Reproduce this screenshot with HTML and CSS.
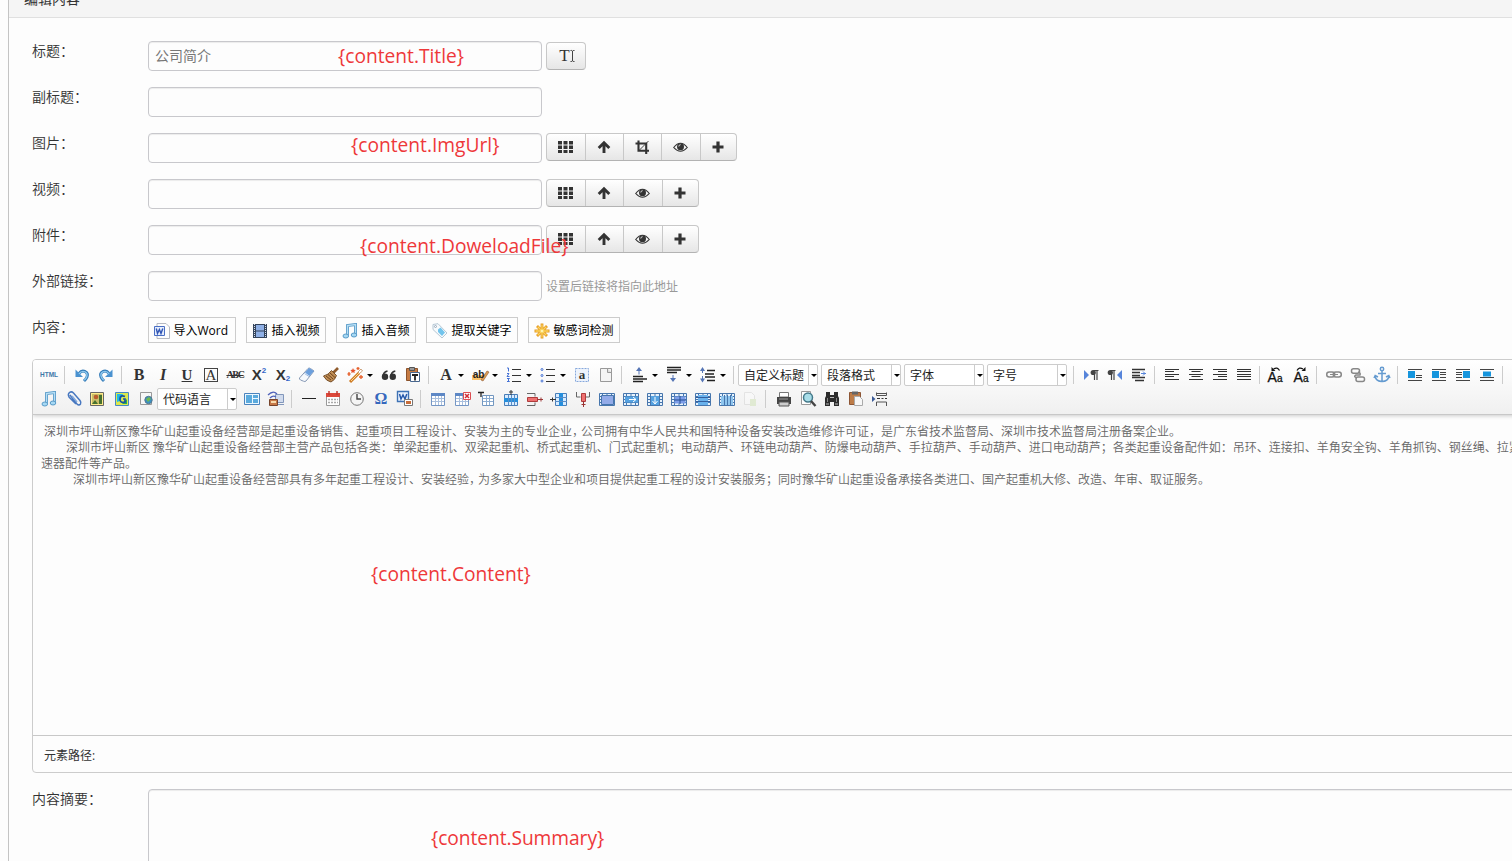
FILE: index.html
```
<!DOCTYPE html>
<html lang="zh-CN">
<head>
<meta charset="utf-8">
<title>编辑内容</title>
<link rel="stylesheet" href="styles.css">
</head>
<body>
<svg class="defs" width="0" height="0" aria-hidden="true">
<defs>
<symbol id="grid" viewBox="0 0 20 20"><path fill="#333" d="M2 4h4v3.500H2zM7.500 4h4v3.500h-4zM13 4h4v3.500h-4zM2 8.500h4V12H2zM7.500 8.500h4V12h-4zM13 8.500h4V12h-4zM2 13h4v3H2zM7.500 13h4v3h-4zM13 13h4v3h-4z"/></symbol>
<symbol id="up" viewBox="0 0 20 20"><path d="M3.700 11 9 5.700l5.300 5.300M9 6.500V16" fill="none" stroke="#333" stroke-width="2.900"/></symbol>
<symbol id="crop" viewBox="0 0 20 20"><path d="M5.500 3.500v10.200H16M2.500 6.500h10.700V17" fill="none" stroke="#333" stroke-width="2.100"/><path d="m6 13.500 9.500-9.500" stroke="#333" stroke-width=".9"/></symbol>
<symbol id="eye" viewBox="0 0 20 20"><path d="M2.700 10.500Q9.500 2 16.300 10.500 9.500 18 2.700 10.500Z" fill="none" stroke="#333" stroke-width="1.100"/><circle cx="9.500" cy="9.800" r="3.500" fill="#333"/><path d="M7.800 9.500q0-1.800 1.800-1.800" stroke="#ddd" fill="none"/></symbol>
<symbol id="plus" viewBox="0 0 20 20"><path d="M9 4.500v11M3.500 10h11" stroke="#333" stroke-width="3.200"/></symbol>
<symbol id="caret" viewBox="0 0 5 14"><path d="M2.500 2v10M.5 1.500h1.300l.7.700.7-.7h1.300M.5 12.500h1.300l.7-.7.7.7h1.300" fill="none" stroke="#444"/></symbol>
<symbol id="word" viewBox="0 0 16 16"><path d="M3 .5h9l3.500 3.500v11.500H3z" fill="#fdfdfd" stroke="#b5b9c2"/><path d="M.5 3.500h10v9H.5z" fill="#e5edfc" stroke="#4a6fc4"/><path d="m2.300 5.500 1.200 5 1.900-4 1.600 4 1.800-5" fill="none" stroke="#3055b5" stroke-width="1.400"/></symbol>
<symbol id="film" viewBox="0 0 16 16"><path d="M1 1h14v14H1z" fill="#34445c"/><path d="M4 2h8v5.500H4zM4 8.500h8V14H4z" fill="#8fb0e6"/><path d="M2.500 1v14M13.500 1v14" stroke="#d8dfea" stroke-dasharray="1 1"/></symbol>
<symbol id="music" viewBox="0 0 16 16"><path d="M5.500 12.500V2.500l8-1v10" fill="none" stroke="#5a9bc8" stroke-width="3"/><path d="M5.500 12.500V2.500l8-1v10" fill="none" stroke="#b6def4" stroke-width="1.300"/><ellipse cx="3.800" cy="13" rx="2.800" ry="2" fill="#a6d8f3" stroke="#5a9bc8"/><ellipse cx="12" cy="12" rx="2.800" ry="2" fill="#a6d8f3" stroke="#5a9bc8"/></symbol>
<symbol id="tag" viewBox="0 0 16 16"><path d="m1 1.500 5-.8L15 10l-5 5L1 6.500z" fill="#f7fafc" stroke="#b5c7d4"/><path d="m6 6.500 2.500-2 4.500 5-3 3.500-4-4z" fill="#72c4ec"/><circle cx="3.500" cy="3.500" r="1" fill="#fff" stroke="#9ab"/></symbol>
<symbol id="star" viewBox="0 0 16 16"><path d="M8 .5v15M.5 8h15M3 3l10 10M13 3 3 13" stroke="#e69b22" stroke-width="2.800"/><path d="M8 1.500v13M1.500 8h13M3.700 3.700l8.600 8.600M12.300 3.700l-8.600 8.600" stroke="#fbd35c" stroke-width="1.300"/><circle cx="8" cy="8" r="1.300" fill="#fff3b0"/></symbol>
<symbol id="undo" viewBox="0 0 20 20"><path d="M7 8.500q2.500-3.500 6-2 3.500 1.700 2 5.500-.8 2-3 4" fill="none" stroke="#347bb8" stroke-width="3"/><path d="M3.500 4.500V12H11z" fill="#4a92d0"/><path d="M7 8.800q2.500-3.500 6-2 3 1.500 1.700 5-.7 2-2.400 3.500" fill="none" stroke="#8cc8ee" stroke-width="1.400"/></symbol>
<symbol id="redo" viewBox="0 0 20 20"><use href="#undo" transform="matrix(-1 0 0 1 20 0)"/></symbol>
<symbol id="eraser" viewBox="0 0 20 20"><path d="M2.500 13 11 3.500q1-1 2.500 0L17 6 9 16q-1 1-2.500.2L3.500 15q-1.500-1-1-2z" fill="#f6f9fd" stroke="#8799b5"/><path d="m8 7.500 4-4.500 5 3-4.500 5z" fill="#6b9fdd"/><path d="m7.500 8.500 4.500 3" stroke="#9ebce4"/></symbol>
<symbol id="brush" viewBox="0 0 20 20"><path d="m17 3-4.500 4.500" stroke="#8f5b2c" stroke-width="2.600"/><path d="m10.500 5.500 5 5Q14 15 10 17q-5-1-7.500-6 5-1 8-5.500z" fill="#c08e54" stroke="#77502b"/><path d="m9 8 5 4.500M5 11l5 4M7 9.500l5 4.500" stroke="#6e431e"/></symbol>
<symbol id="wand" viewBox="0 0 20 20"><path d="m5 17 9-9" stroke="#ce7c26" stroke-width="3"/><path d="m6 16 8-8" stroke="#ffd58a"/><path d="m8 3 .8 1.700 2 .2-1.400 1.400.3 1.700L8 7.200 6.300 8l.3-1.700L5.300 5l2-.3z" fill="#e6502b"/><path d="M13 2v3M11.500 3.500h3M16 10v4M14 12h4M4 7v4M2.500 9h3" stroke="#e6602b" stroke-width="1.300"/><path d="m13 7 3-3 1.500 2-3 2.500z" fill="#fff" stroke="#b77d48" stroke-width=".7"/></symbol>
<symbol id="quote" viewBox="0 0 20 20"><circle cx="6" cy="11.800" r="3.200" fill="#333"/><circle cx="13.800" cy="11.800" r="3.200" fill="#333"/><path d="M8.500 6q-4.500 1-4.500 6M16.300 6q-4.500 1-4.500 6" fill="none" stroke="#333" stroke-width="1.600"/></symbol>
<symbol id="pasteT" viewBox="0 0 20 20"><path d="M3.500 3.500h11v12h-11z" fill="#c67b43" stroke="#8b532c"/><path d="M6.500 2.500h5v3h-5z" fill="#999" stroke="#555"/><path d="M7.500 7.500h9v9h-9z" fill="#fff" stroke="#48678f"/><path d="M9 10h6M12 10v5.500" stroke="#222" stroke-width="1.800"/></symbol>
<symbol id="mark" viewBox="0 0 20 20"><path d="M2 10h12v5H2z" fill="#fbc168"/><path d="m11 15 6-9 2 1-6 9z" fill="#df9d52" stroke="#8e5b35" stroke-width=".6"/></symbol>
<symbol id="ol" viewBox="0 0 20 20"><path d="M8 4.500h9M8 10.500h9M8 16.500h9" stroke="#333"/><path d="M3 3h1.500v3.500M3 8.500h2l-2 3h2.500M3 13.500h2.500L4 15l1.500 1.500H3" fill="none" stroke="#4471d5"/></symbol>
<symbol id="ul" viewBox="0 0 20 20"><path d="M8 4.500h9M8 10.500h9M8 16.500h9" stroke="#333"/><g fill="none" stroke="#4471d5"><circle cx="4" cy="4.500" r="1"/><circle cx="4" cy="10.500" r="1"/><circle cx="4" cy="16" r="1"/></g></symbol>
<symbol id="seldash" viewBox="0 0 20 20"><path d="M3.500 3.500h13v13h-13z" fill="#edf3fc" stroke="#86a8dc" stroke-dasharray="2 1"/></symbol>
<symbol id="page" viewBox="0 0 20 20"><path d="M4.500 3.500h11v13h-11z" fill="#f4f4f4" stroke="#999"/><path d="M11.500 3.500v4h4" fill="#ddd" stroke="#999"/></symbol>
<symbol id="sptop" viewBox="0 0 20 20"><path d="M3 11.500h10M3 14h14M3 16.500h10" stroke="#222" stroke-width="1.300"/><path d="M9 9.500V5" stroke="#5575b5"/><path d="M6 6h6L9 2z" fill="#5575b5"/></symbol>
<symbol id="spbot" viewBox="0 0 20 20"><path d="M3 2.500h14M3 5h14M3 7.500h10" stroke="#222" stroke-width="1.300"/><path d="M9 10v5" stroke="#5575b5"/><path d="M6 13h6l-3 4z" fill="#5575b5"/></symbol>
<symbol id="lh" viewBox="0 0 20 20"><path d="M9 5.500h8M7 9h9M7 12h10M9 15.500h8" stroke="#222" stroke-width="1.300"/><path d="M4.500 4v4M4.500 11v5" stroke="#5575b5"/><path d="M2 6h5L4.500 2zM2 13.500h5l-2.500 4z" fill="#5575b5"/></symbol>
<symbol id="ltr" viewBox="0 0 20 20"><path d="m3 5 5 5-5 5z" fill="#5684da"/><path d="M17.500 5.500h-5M13.500 5v10M16 5v10" stroke="#444" stroke-width="1.200"/><circle cx="12.200" cy="7.500" r="2.600" fill="#444"/></symbol>
<symbol id="rtl" viewBox="0 0 20 20"><path d="m17 5-5 5 5 5z" fill="#5684da"/><path d="M10.500 5.500h-5M6.500 5v10M9 5v10" stroke="#444" stroke-width="1.200"/><circle cx="5.300" cy="7.500" r="2.600" fill="#444"/></symbol>
<symbol id="indent" viewBox="0 0 20 20"><path d="M3 4.500h13M3 7.500h8M3 10.500h8M3 12.500h13M6 15.500h9" stroke="#333" stroke-width="1.400"/><path d="M12 8.500h5M14 6.500l2 2-2 2" fill="none" stroke="#5684da"/></symbol>
<symbol id="al" viewBox="0 0 20 20"><path d="M3 4.500h14M3 6.500h9M3 9.500h14M3 11.500h9M3 14.500h14" stroke="#333"/></symbol>
<symbol id="ac" viewBox="0 0 20 20"><path d="M3 4.500h14M5.500 6.500h9M3 9.500h14M5.500 11.500h9M3 14.500h14" stroke="#333"/></symbol>
<symbol id="ar" viewBox="0 0 20 20"><path d="M3 4.500h14M8 6.500h9M3 9.500h14M8 11.500h9M3 14.500h14" stroke="#333"/></symbol>
<symbol id="aj" viewBox="0 0 20 20"><path d="M3 4.500h14M3 6.500h14M3 9.500h14M3 11.500h14M3 14.500h14" stroke="#333"/></symbol>
<symbol id="arcl" viewBox="0 0 20 20"><path d="M14.500 5.500q-2-4-6-1.500" fill="none" stroke="#111" stroke-width="1.200"/><path d="M6.500 2v4h4z" fill="#111"/></symbol>
<symbol id="arcr" viewBox="0 0 20 20"><path d="M6 5.500q2-4 6-1.500" fill="none" stroke="#111" stroke-width="1.200"/><path d="M14.500 2v4h-4z" fill="#111"/></symbol>
<symbol id="link" viewBox="0 0 20 20"><g fill="none" stroke="#888" stroke-width="1.500"><rect x="2.700" y="7" width="8" height="5" rx="2.500"/><rect x="9.300" y="7" width="8" height="5" rx="2.500"/></g><path d="M6 9.500h8" stroke="#888" stroke-width="1.200"/></symbol>
<symbol id="unlink" viewBox="0 0 20 20"><g fill="none" stroke="#888" stroke-width="1.500"><rect x="3.500" y="3.700" width="8" height="4.500" rx="2"/><rect x="8" y="12" width="8.500" height="4.500" rx="2"/><path d="M10 7q3 1 2 3H8q-2 1-1 2l2 1"/></g></symbol>
<symbol id="anchor" viewBox="0 0 20 20"><g fill="none" stroke="#659bd0" stroke-width="1.500"><circle cx="10" cy="4" r="1.700"/><path d="M10 6v11M6 8.500h8M3 11q1 5.500 7 5.500T17 11M2 13l1.200-2.500L6 12M18 13l-1.200-2.500L14 12"/></g></symbol>
<symbol id="iml" viewBox="0 0 20 20"><path d="M3 4.500h14M11 10.500h6M11 12.500h6M3 15.500h14" stroke="#444"/><path d="M3 6h7v7H3z" fill="#1695dd"/></symbol>
<symbol id="imr" viewBox="0 0 20 20"><path d="M3 4.500h14M11 7.500h6M11 9.500h6M11 12.500h6M3 15.500h14" stroke="#444"/><path d="M3 6h7v7H3z" fill="#1695dd"/></symbol>
<symbol id="imrr" viewBox="0 0 20 20"><path d="M3 4.500h14M3 7.500h6M3 9.500h6M3 12.500h6M3 15.500h14" stroke="#444"/><path d="M10 6h7v7h-7z" fill="#1695dd"/></symbol>
<symbol id="imc" viewBox="0 0 20 20"><path d="M3 4.500h14M3 15.500h14M3 12.500h14" stroke="#444"/><path d="M6 6.500h8v5H6z" fill="#1695dd"/></symbol>
<symbol id="clip" viewBox="0 0 20 20"><path d="m6 6 7 9q2 2 3.500 0 1-1.500-.5-3.500L9.500 4q-2-2-4-.5T5 8l7 7" fill="none" stroke="#4878c0" stroke-width="1.500" transform="translate(1)"/><path d="m9 7 5 6" stroke="#83a9dd" stroke-width="1.500"/></symbol>
<symbol id="img" viewBox="0 0 20 20"><path d="M3.500 3.500h13v13h-13z" fill="#ffeb8b" stroke="#666"/><path d="M5 5h10v10H5z" fill="#c9bd68"/><circle cx="9" cy="8" r="2.300" fill="#b85c2e"/><path d="m5 15 3-4 3 4zM12 6h3v9h-3z" fill="#46712e"/></symbol>
<symbol id="gmap" viewBox="0 0 20 20"><path d="M4.500 3.500h13v13h-13z" fill="#dce94d" stroke="#4689c5"/><path d="M6 5h6l-3 7-3 1z" fill="#20b9e8"/><path d="m11 15 5-5v5z" fill="#2daa4f"/><path d="M14 7.500q-5-2-5 2.500t5 3v-3h-2" fill="none" stroke="#1753a0" stroke-width="1.700"/></symbol>
<symbol id="frame" viewBox="0 0 20 20"><path d="M5.500 3.500h11v12h-11z" fill="#f7f7f7" stroke="#999"/><circle cx="13.500" cy="11" r="3.700" fill="#3992c4" stroke="#55768e"/><path d="m11 10 3-2 2 2-3 3z" fill="#71b94d"/></symbol>
<symbol id="tpl" viewBox="0 0 20 20"><path d="M2.500 4.500h15v11h-15z" fill="#eaf7ff" stroke="#4b83bd"/><path d="M4 6h6v8H4zM11 6h5v3h-5zM11 10h5v4h-5z" fill="#5aaadd"/></symbol>
<symbol id="ftp" viewBox="0 0 20 20"><path d="M9.500 5.500h8v8h-8z" fill="#d1dbed" stroke="#8297bb"/><path d="M11 15.500h7" stroke="#8297bb"/><path d="M2 6q5-5 9-1M4 9q3-3 6-1" fill="none" stroke="#4f62ba" stroke-width="1.300"/><path d="M3.500 10.500h8v6h-8z" fill="#c77949" stroke="#76432b"/><path d="M5 12h5v2H5z" fill="#f8dbac"/></symbol>
<symbol id="hr" viewBox="0 0 20 20"><path d="M3 9.500h14" stroke="#222" stroke-width="1.200"/></symbol>
<symbol id="date" viewBox="0 0 20 20"><path d="M3.500 4.500h13v12h-13z" fill="#fff" stroke="#999"/><path d="M3 4h14v4H3z" fill="#dc493b"/><path d="M6 2v4M14 2v4" stroke="#c33b31" stroke-width="1.500"/><path d="M5 10.500h10M5 13.500h10" stroke="#aaa" stroke-dasharray="2 1" stroke-width="1.500"/></symbol>
<symbol id="clock" viewBox="0 0 20 20"><circle cx="10" cy="10" r="6.300" fill="#f5f5f5" stroke="#777"/><path d="M10 5v5h4" fill="none" stroke="#444" stroke-width="1.400"/></symbol>
<symbol id="wimg" viewBox="0 0 20 20"><path d="M2.500 2.500h11v10h-11z" fill="#eaf3ff" stroke="#3e72b5" stroke-width="1.400"/><path d="m4.500 5 1.500 5 2-4 2 4 1.800-5" fill="none" stroke="#285aab" stroke-width="1.500"/><path d="M9.500 10.500h8v6h-8z" fill="#fff" stroke="#777"/><path d="M11 12h5v3h-5z" fill="#c86d3a"/></symbol>
<symbol id="table" viewBox="0 0 20 20"><path d="M3.500 4.500h13v12h-13z" fill="#fff" stroke="#7496c5"/><path d="M3 4h14v3H3z" fill="#5d87c5"/><path d="M4 9.500h12M4 12.500h12M7.500 7v9M10.500 7v9M13.500 7v9" stroke="#a9bfdd"/></symbol>
<symbol id="tdel" viewBox="0 0 20 20"><use href="#table"/><path d="M11.500 3.500h7v7h-7z" fill="#fff" stroke="#dc4e52"/><path d="m13 5 4 4M17 5l-4 4" stroke="#d42c36" stroke-width="1.500"/></symbol>
<symbol id="tins" viewBox="0 0 20 20"><path d="M2 3.500h6M5 3v5" stroke="#222" stroke-width="1.300"/><path d="M6.500 6.500h11v10h-11z" fill="#fff" stroke="#7297c0"/><path d="M7 9.500h10M7 12.500h10M10.500 7v9M13.500 7v9" stroke="#8bacd1"/></symbol>
<symbol id="rowin" viewBox="0 0 20 20"><path d="M4.500 5.500h13v11h-13z" fill="#d8ecff" stroke="#4a7eb8"/><path d="M4 9h14v4H4z" fill="#258edc"/><path d="M8.500 6v10M11.500 6v10M14.500 6v10" stroke="#5b8dc6"/><path d="M11 1v5M9 3h4" stroke="#333"/></symbol>
<symbol id="rowdel" viewBox="0 0 20 20"><path d="M3 4.500h8v3M3 16.500h8v-3" fill="none" stroke="#666"/><path d="M3.500 8.500h10v4h-10z" fill="#ee6f6f" stroke="#ae3c3c"/><path d="M13 10.500h6M17 8.500v4" stroke="#9a3434"/></symbol>
<symbol id="colin" viewBox="0 0 20 20"><path d="M7.500 4.500h11v12h-11z" fill="#d8ecff" stroke="#4a7eb8"/><path d="M11 4h4v13h-4z" fill="#258edc"/><path d="M7 8.500h12M7 12.500h12" stroke="#5b8dc6"/><path d="M2 10.500h6M4.500 8.500v4" stroke="#333"/></symbol>
<symbol id="coldel" viewBox="0 0 20 20"><path d="M4.500 3v5h4M17.500 3v5h-4" fill="none" stroke="#666"/><path d="M9.500 4.500h4v8h-4z" fill="#ee7070" stroke="#ae3c3c"/><path d="M11.500 12v6M9.500 15.500h4" stroke="#9a3434"/></symbol>
<symbol id="cells" viewBox="0 0 20 20"><path d="M3.500 4.500h15v12h-15z" fill="#e7f2fc" stroke="#4776ad"/><path d="M4 7.500h14M4 10.500h14M4 13.500h14M6.500 5v11M15.500 5v11M11 5v11" stroke="#4776ad"/></symbol>
<symbol id="merge" viewBox="0 0 20 20"><use href="#cells"/><path d="M5.500 6.500h12v9h-12z" fill="#93abe8" stroke="#4776ad"/></symbol>
<symbol id="mright" viewBox="0 0 20 20"><use href="#cells"/><path d="M5 7.500h13v6H5z" fill="#55a2e1"/><path d="M9 10.500h7M13 8l3 2.500-3 2.500" stroke="#fff" fill="none"/></symbol>
<symbol id="mdown" viewBox="0 0 20 20"><use href="#cells"/><path d="M7 7h8v9H7z" fill="#55a2e1"/><path d="M11 8v6M8.500 12l2.500 3 2.500-3" stroke="#fff" fill="none"/></symbol>
<symbol id="split" viewBox="0 0 20 20"><use href="#cells"/><path d="M6.500 7.500h11v7h-11z" fill="#7c9de8"/><path d="M6 11h12M12 7v8" stroke="#244f94"/></symbol>
<symbol id="srow" viewBox="0 0 20 20"><use href="#cells"/><path d="M6 6h10v10H6z" fill="#68b1ec"/><path d="M4 8.500h14M4 12.500h14" stroke="#345f9d"/></symbol>
<symbol id="scol" viewBox="0 0 20 20"><use href="#cells"/><path d="M5 7h12v9H5z" fill="#8ec5ee"/><path d="M8.500 6v10M11.500 6v10M14.500 6v10" stroke="#4776ad"/></symbol>
<symbol id="chart" viewBox="0 0 20 20"><g opacity=".3"><path d="M4.500 3.500h7l3 3v9h-10z" fill="#fff" stroke="#bbb"/><path d="M10 10h6v7h-6z" fill="#b7d68a"/></g></symbol>
<symbol id="print" viewBox="0 0 20 20"><path d="M5.500 3.500h9V8h-9z" fill="#fff" stroke="#777"/><path d="M3 8h14v7H3z" fill="#444"/><path d="M5 13h10v4H5z" fill="#ccc" stroke="#555"/><path d="M5 10h9" stroke="#999"/></symbol>
<symbol id="find" viewBox="0 0 20 20"><path d="M3.500 2.500h9v13h-9z" fill="#fff" stroke="#999"/><circle cx="10" cy="8.500" r="4.500" fill="#a8dde8" stroke="#44798a" stroke-width="1.500"/><path d="m13 12 4.500 5" stroke="#444" stroke-width="2.400"/></symbol>
<symbol id="bino" viewBox="0 0 20 20"><path d="M4 3h4v3h4V3h4v4l1 2v8h-5v-4H8v4H3V9l1-2z" fill="#2c2c2c"/><path d="M5.500 9v4M14.500 9v4" stroke="#888"/><path d="M8 8.500h4M4 15h3M13 15h3" stroke="#bbb"/></symbol>
<symbol id="paste" viewBox="0 0 20 20"><path d="M3.500 3.500h11v12h-11z" fill="#bd7c48" stroke="#8d5635"/><path d="M6 2.500h6v3H6z" fill="#666"/><path d="M8.500 7.500h5l3 3v6h-8z" fill="#f7f7f7" stroke="#aaa"/></symbol>
<symbol id="break" viewBox="0 0 20 20"><path d="M6.500 3.500v3h10v-3M6.500 17v-4h10v4M6 4.500h11" fill="none" stroke="#555"/><path d="M7 9.500h3M11.500 9.500h2M15 9.500h2" stroke="#333"/><path d="m2 7 3.500 3L2 13z" fill="#3c5c98"/></symbol>
</defs></svg>

<main class="panel">
<header class="panel-head"><span>编辑内容</span></header>
<section class="form">
  <div class="row"><label>标题：</label><div class="input">公司简介</div><div class="btns single"><b class="tt">T<svg><use href="#caret"/></svg></b></div></div>
  <div class="row"><label>副标题：</label><div class="input"></div></div>
  <div class="row"><label>图片：</label><div class="input"></div><div class="btns"><b><svg><use href="#grid"/></svg></b><b><svg><use href="#up"/></svg></b><b><svg><use href="#crop"/></svg></b><b class="w39"><svg><use href="#eye"/></svg></b><b class="last"><svg><use href="#plus"/></svg></b></div></div>
  <div class="row"><label>视频：</label><div class="input"></div><div class="btns"><b><svg><use href="#grid"/></svg></b><b><svg><use href="#up"/></svg></b><b class="w39"><svg><use href="#eye"/></svg></b><b class="last"><svg><use href="#plus"/></svg></b></div></div>
  <div class="row"><label>附件：</label><div class="input"></div><div class="btns"><b><svg><use href="#grid"/></svg></b><b><svg><use href="#up"/></svg></b><b class="w39"><svg><use href="#eye"/></svg></b><b class="last"><svg><use href="#plus"/></svg></b></div></div>
  <div class="row"><label>外部链接：</label><div class="input"></div><span class="hint">设置后链接将指向此地址</span></div>
  <div class="row tools"><label>内容：</label>
    <span class="tool w88"><svg><use href="#word"/></svg>导入Word</span><span class="tool"><svg><use href="#film"/></svg>插入视频</span><span class="tool"><svg><use href="#music"/></svg>插入音频</span><span class="tool w92"><svg><use href="#tag"/></svg>提取关键字</span><span class="tool w92"><svg><use href="#star"/></svg>敏感词检测</span></div>
</section>

<section class="editor">
<div class="toolbar">
<div class="line">
<i class="c html">HTML</i><i class="sep"></i><i class="c"><svg><use href="#undo"/></svg></i><i class="c"><svg><use href="#redo"/></svg></i><i class="sep"></i>
<i class="c g bold">B</i><i class="c g ital">I</i><i class="c g under">U</i><i class="c g"><em class="boxed">A</em></i><i class="c g abc">ABC</i><i class="c x">X<sup>2</sup></i><i class="c x">X<sub>2</sub></i>
<i class="c"><svg><use href="#eraser"/></svg></i><i class="c"><svg><use href="#brush"/></svg></i><i class="c"><svg><use href="#wand"/></svg></i><i class="dd"></i><i class="c"><svg><use href="#quote"/></svg></i><i class="c"><svg><use href="#pasteT"/></svg></i><i class="sep"></i>
<i class="c g bold">A</i><i class="dd"></i><i class="c over ab"><svg><use href="#mark"/></svg><em>ab</em></i><i class="dd"></i><i class="c"><svg><use href="#ol"/></svg></i><i class="dd"></i><i class="c"><svg><use href="#ul"/></svg></i><i class="dd"></i><i class="c over sa"><svg><use href="#seldash"/></svg><em>a</em></i><i class="c"><svg><use href="#page"/></svg></i><i class="sep s10"></i>
<i class="c"><svg><use href="#sptop"/></svg></i><i class="dd"></i><i class="c"><svg><use href="#spbot"/></svg></i><i class="dd"></i><i class="c"><svg><use href="#lh"/></svg></i><i class="dd"></i><i class="sep s8"></i>
<span class="combo">自定义标题<i></i></span><span class="combo">段落格式<i></i></span><span class="combo">字体<i></i></span><span class="combo">字号<i></i></span><i class="sep"></i>
<i class="c"><svg><use href="#ltr"/></svg></i><i class="c"><svg><use href="#rtl"/></svg></i><i class="c"><svg><use href="#indent"/></svg></i><i class="sep"></i>
<i class="c"><svg><use href="#al"/></svg></i><i class="c"><svg><use href="#ac"/></svg></i><i class="c"><svg><use href="#ar"/></svg></i><i class="c"><svg><use href="#aj"/></svg></i><i class="sep s7"></i>
<i class="c over aa"><svg><use href="#arcl"/></svg><em>A<small>a</small></em></i><i class="c over aa wide"><svg><use href="#arcr"/></svg><em>A<small>a</small></em></i><i class="sep"></i>
<i class="c"><svg><use href="#link"/></svg></i><i class="c"><svg><use href="#unlink"/></svg></i><i class="c"><svg><use href="#anchor"/></svg></i><i class="sep"></i>
<i class="c"><svg><use href="#iml"/></svg></i><i class="c"><svg><use href="#imr"/></svg></i><i class="c"><svg><use href="#imrr"/></svg></i><i class="c"><svg><use href="#imc"/></svg></i><i class="sep"></i>
</div>
<div class="line">
<i class="c"><svg class="s16"><use href="#music"/></svg></i><i class="c"><svg><use href="#clip"/></svg></i><i class="c"><svg><use href="#img"/></svg></i><i class="c"><svg><use href="#gmap"/></svg></i><i class="c"><svg><use href="#frame"/></svg></i>
<span class="combo">代码语言<i></i></span>
<i class="c"><svg><use href="#tpl"/></svg></i><i class="c"><svg><use href="#ftp"/></svg></i><i class="sep"></i>
<i class="c"><svg><use href="#hr"/></svg></i><i class="c"><svg><use href="#date"/></svg></i><i class="c"><svg><use href="#clock"/></svg></i><i class="c omega">Ω</i><i class="c"><svg><use href="#wimg"/></svg></i><i class="sep"></i>
<i class="c"><svg><use href="#table"/></svg></i><i class="c"><svg><use href="#tdel"/></svg></i><i class="c"><svg><use href="#tins"/></svg></i><i class="c"><svg><use href="#rowin"/></svg></i><i class="c"><svg><use href="#rowdel"/></svg></i><i class="c"><svg><use href="#colin"/></svg></i><i class="c"><svg><use href="#coldel"/></svg></i><i class="c"><svg><use href="#merge"/></svg></i><i class="c"><svg><use href="#mright"/></svg></i><i class="c"><svg><use href="#mdown"/></svg></i><i class="c"><svg><use href="#split"/></svg></i><i class="c"><svg><use href="#srow"/></svg></i><i class="c"><svg><use href="#scol"/></svg></i><i class="c"><svg><use href="#chart"/></svg></i><i class="sep s10"></i>
<i class="c"><svg><use href="#print"/></svg></i><i class="c"><svg><use href="#find"/></svg></i><i class="c"><svg><use href="#bino"/></svg></i><i class="c"><svg><use href="#paste"/></svg></i><i class="c"><svg><use href="#break"/></svg></i>
</div>
</div>
<div class="body">
<p class="in1">深圳市坪山新区豫华矿山起重设备经营部是起重设备销售、起重项目工程设计、安装为主的专业企业<span class="tight">，</span>公司拥有中华人民共和国特种设备安装改造维修许可证，是广东省技术监督局、深圳市技术监督局注册备案企业。</p>
<p class="in2">深圳市坪山新区 豫华矿山起重设备经营部主营产品包括各类：单梁起重机、双梁起重机、桥式起重机、门式起重机；电动葫芦、环链电动葫芦、防爆电动葫芦、手拉葫芦、手动葫芦、进口电动葫芦；各类起重设备配件如：吊环、连接扣、羊角安全钩、羊角抓钩、钢丝绳、拉紧</p>
<p>速器配件等产品。</p>
<p class="in3">深圳市坪山新区豫华矿山起重设备经营部具有多年起重工程设计、安装经验<span class="tight">，</span>为多家大中型企业和项目提供起重工程的设计安装服务；同时豫华矿山起重设备承接各类进口、国产起重机大修、改造、年审、取证服务。</p>
</div>
<footer class="path">元素路径:</footer>
</section>
<section class="summary"><label>内容摘要：</label><div class="area"></div></section>
</main>
<span class="note n1">{content.Title}</span>
<span class="note n2">{content.ImgUrl}</span>
<span class="note n3">{content.DoweloadFile}</span>
<span class="note n4">{content.Content}</span>
<span class="note n5">{content.Summary}</span>
</body>
</html>
```
FILE: styles.css
```
* { box-sizing: border-box; }
body { margin: 0; height: 861px; overflow: hidden; position: relative; background: #fdfdfd; color: #333; font: 14px/20px "Open Sans", "Noto Sans CJK SC", sans-serif; }
i, em { font-style: normal; }
.defs { display: block; height: 0; }
.panel { margin-left: 8px; height: 861px; border-left: 1px solid #c4c4c4; overflow: hidden; }
.panel-head { height: 18px; padding-left: 15px; background: #f5f5f5; border-bottom: 1px solid #e0e0e0; line-height: 20px; overflow: hidden; }
.panel-head span { display: block; margin-top: -11px; }
.form { padding: 23px 0 0 23px; }
.row { display: flex; height: 46px; align-items: flex-start; }
label { width: 116px; flex: none; margin-top: -1px; color: #333; font-family: "Noto Sans CJK SC", sans-serif; font-weight: 350; }
.input { width: 394px; height: 30px; border: 1px solid #c8c8cc; border-radius: 4px; padding-left: 6px; line-height: 28px; color: #777; margin-right: 4px; background: #fdfdfd; box-shadow: inset 0 1px 1px rgba(0,0,0,.07); }
.btns { display: flex; height: 28px; border: 1px solid #c8c8c8; border-bottom-color: #b3b3b3; border-radius: 4px; background: linear-gradient(#fff, #e6e6e6); }
.btns b { width: 38px; display: flex; align-items: center; justify-content: center; border-right: 1px solid #c8c8c8; }
.btns b:first-child, .btns .w39 { width: 39px; }
.btns b.last { width: 35px; border: 0; }
.btns svg { width: 20px; height: 20px; }
.btns.single { margin-top: 1px; }
.btns.single .tt { width: 38px; border: 0; font: 17px/26px "Liberation Serif", serif; padding-left: 2px; }
.btns .tt svg { width: 5px; height: 14px; }
.hint { color: #999; font-size: 12px; line-height: 29px; font-family: "Noto Sans CJK SC", sans-serif; }
.tools { height: 42px; }
.tool { width: 80px; height: 26px; border: 1px solid #ccc; margin-right: 10px; display: flex; align-items: center; padding: 2px 0 0 5px; gap: 3.500px; font-size: 12px; color: #000; white-space: nowrap; background: #fdfdfd; }
.w88 { width: 88px; }
.w92 { width: 92px; }
.tool svg { width: 16px; height: 16px; flex: none; }
.editor { margin-left: 23px; width: 1600px; height: 414px; border: 1px solid #ccc; border-radius: 4px; display: flex; flex-direction: column; overflow: hidden; }
.toolbar { height: 55px; padding: 3px 0 0 4px; background: linear-gradient(#fff, #f0f0f0); border-bottom: 1px solid #c8c8c8; box-shadow: 0 1px 4px rgba(0,0,0,.2); flex: none; }
.line { display: flex; height: 24px; align-items: center; }
.c { width: 24px; height: 24px; flex: none; display: flex; align-items: center; justify-content: center; }
.c svg { width: 20px; height: 20px; flex: none; }
.c svg.s16 { width: 16px; height: 16px; }
.c.wide { width: 26px; padding-left: 2px; }
.sep { width: 9px; height: 18px; flex: none; background: linear-gradient(#ccc, #ccc) 3px 0 / 1px 18px no-repeat; }
.s10 { width: 10px; }
.s8 { width: 8px; }
.s7 { width: 7px; }
.dd { width: 10px; flex: none; height: 3px; display: flex; }
.dd::after { content: ""; border: 3px solid transparent; border-top-color: #000; border-bottom: 0; }
.html { font: bold 6.500px/10px "Liberation Sans", sans-serif; color: #3f78a8; }
.g { font: 16px/18px "Liberation Serif", serif; color: #333; }
.bold { font-weight: bold; }
.ital { font-style: italic; font-weight: bold; }
.under { text-decoration: underline; font-weight: bold; font-size: 15px; }
.boxed { width: 14px; height: 14px; border: 1px solid #444; line-height: 13px; font-size: 15px; text-align: center; display: flex; justify-content: center; }
.abc { font-size: 10px; font-weight: bold; text-decoration: line-through; letter-spacing: -1.300px; }
.x { font: bold 15px/14px "Liberation Sans", sans-serif; color: #333; }
.x sup, .x sub { font-size: 8px; line-height: 8px; color: #3465c8; }
.x sup { margin-bottom: 8px; }
.x sub { margin-top: 8px; }
.over { display: grid; place-items: center; }
.over > * { grid-area: 1 / 1; }
.ab em { font: bold 10px/12px "Liberation Sans", sans-serif; padding-right: 3px; color: #222; }
.sa em { font: bold 13px/14px "Liberation Serif", serif; color: #333; }
.aa em { font: 14px/12px "Liberation Sans", sans-serif; color: #111; padding-top: 5px; white-space: nowrap; -webkit-text-stroke: .3px #111; }
.aa small { font-size: 10px; }
.omega { font: bold 16px/18px "Liberation Serif", serif; color: #3668bd; }
.combo { width: 80px; height: 22px; flex: none; margin-right: 3px; display: flex; justify-content: space-between; border: 1px solid #ccc; border-radius: 2px; background: #fff; padding-left: 5px; font-size: 12px; line-height: 22px; color: #222; white-space: nowrap; }
.combo i { width: 10px; flex: none; height: 20px; margin-right: -1px; border-left: 1px solid #ccc; display: flex; align-items: center; justify-content: center; }
.combo i::after { content: ""; border: 3px solid transparent; border-top-color: #000; border-bottom: 0; }
.body { height: 321px; flex: none; padding: 8px 0 0 8px; border-bottom: 1px solid #c8c8c8; color: #666; font: 350 12px/16px "Noto Sans CJK SC", sans-serif; white-space: nowrap; }
.body p { margin: 0; }
.body .in1 { padding-left: 3px; }
.body .in2 { padding-left: 25px; }
.body .in3 { padding-left: 32px; }
.tight { letter-spacing: -3px; }
.path { padding-left: 11px; font-size: 12px; line-height: 40px; height: 36px; }
.summary { display: flex; margin: 16px 0 0 23px; }
.area { flex: none; width: 1500px; height: 120px; border: 1px solid #c8c8cc; border-radius: 4px; box-shadow: inset 0 1px 1px rgba(0,0,0,.07); }
.note { position: absolute; color: #ee383a; font: 19.200px/26px "Open Sans", sans-serif; white-space: nowrap; }
.n1 { left: 338px; top: 43px; }
.n2 { left: 351px; top: 132px; }
.n3 { left: 360px; top: 233px; }
.n4 { left: 371px; top: 561px; }
.n5 { left: 431px; top: 825px; letter-spacing: -.06px; }
```
